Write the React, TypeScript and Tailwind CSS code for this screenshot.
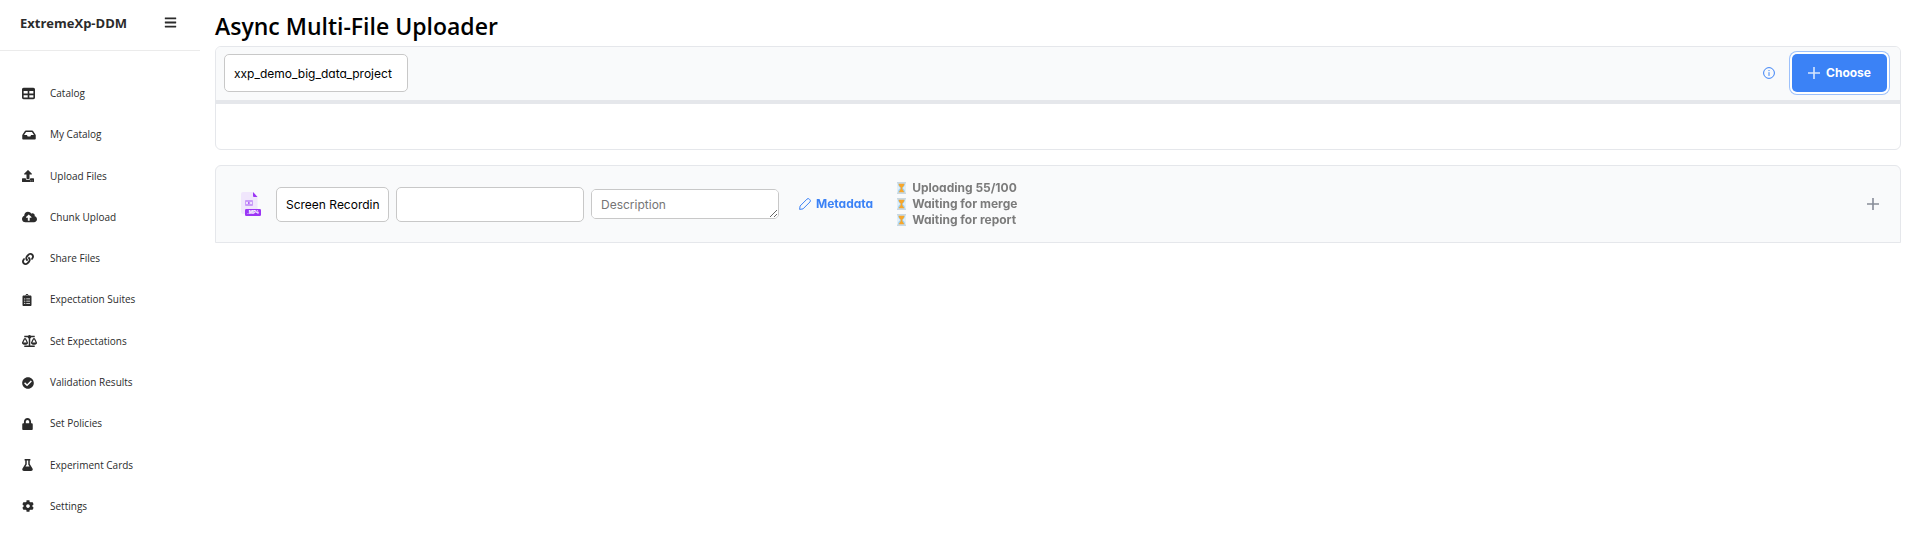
import type { ReactNode } from "react";
import type { IconType } from "react-icons";
import {
  FaBalanceScale,
  FaBars,
  FaCheckCircle,
  FaClipboardList,
  FaCloudUploadAlt,
  FaCog,
  FaFlask,
  FaInbox,
  FaLink,
  FaLock,
  FaUpload,
} from "react-icons/fa";
import { FaTable } from "react-icons/fa6";

const navItems: { label: string; icon: IconType; size: string }[] = [
  { label: "Catalog", icon: FaTable, size: "size-[13px]" },
  { label: "My Catalog", icon: FaInbox, size: "h-3 w-[14px]" },
  { label: "Upload Files", icon: FaUpload, size: "size-3" },
  { label: "Chunk Upload", icon: FaCloudUploadAlt, size: "h-3 w-[15px]" },
  { label: "Share Files", icon: FaLink, size: "size-3" },
  { label: "Expectation Suites", icon: FaClipboardList, size: "h-3 w-[10px]" },
  { label: "Set Expectations", icon: FaBalanceScale, size: "h-3 w-[15px]" },
  { label: "Validation Results", icon: FaCheckCircle, size: "size-3" },
  { label: "Set Policies", icon: FaLock, size: "h-3 w-[11px]" },
  { label: "Experiment Cards", icon: FaFlask, size: "h-3 w-[11px]" },
  { label: "Settings", icon: FaCog, size: "size-3" },
];

const steps = ["Uploading 55/100", "Waiting for merge", "Waiting for report"];

function PlusIcon({ className }: { className?: string }) {
  return (
    <svg viewBox="0 0 12 12" className={className} fill="currentColor" aria-hidden="true">
      <path d="M5.200 0h1.600v5.200H12v1.600H6.800V12H5.200V6.800H0V5.200h5.200z" />
    </svg>
  );
}

function InfoIcon() {
  return (
    <svg viewBox="0 0 12 12" className="size-3" fill="none" stroke="currentColor" aria-hidden="true">
      <circle cx="6" cy="6" r="5.4" strokeWidth="1" />
      <path d="M6 5.200v3.700M6 3v1.100" strokeWidth="1" />
    </svg>
  );
}

function PencilIcon() {
  return (
    <svg viewBox="0 0 12 12" className="size-3" fill="none" stroke="currentColor" strokeLinejoin="round" aria-hidden="true">
      <path d="M.6 11.400l.5-3.400L8 1.100a1.600 1.600 0 0 1 2.300 0l.6.6a1.600 1.600 0 0 1 0 2.300L4 10.900z" strokeWidth="1" />
    </svg>
  );
}

function Hourglass() {
  return (
    <svg viewBox="0 0 9 12" className="h-3 w-[9px]" aria-hidden="true">
      <path d="M0 0h9v12H0z" fill="#e3eff7" />
      <path d="M1 1.500h7c0 2.200-.8 3.300-2.400 4.500C7.200 7.200 8 8.300 8 10.500H1C1 8.300 1.800 7.200 3.400 6 1.800 4.800 1 3.700 1 1.500z" fill="#9fd2f3" />
      <path d="M1.500 1.500h6c-.3 2-1.100 3-2.200 4v1.500l2.200 3.500h-6L3.700 7V5.500c-1.100-1-1.900-2-2.200-4z" fill="#f7a62b" />
      <path d="M0 0h9v1.500H0zM0 10.500h9V12H0z" fill="#c9d8e2" />
    </svg>
  );
}

function Mp4Icon() {
  return (
    <svg viewBox="0 0 20 24" className="h-6 w-5" role="img" aria-label="MP4 file">
      <path d="M2 0h10l4.500 5v17H2a2 2 0 0 1-2-2V2a2 2 0 0 1 2-2z" fill="#f0e6fc" />
      <path d="M12 0l4.500 5H13a1 1 0 0 1-1-1z" fill="#9b35f5" />
      <path d="M4.500 8.500h7v5h-7zM4.500 9.500h7M4.500 12.500h7" fill="none" stroke="#c99bf8" strokeWidth="1" />
      <path d="M7.200 9.800l2.200 1.200-2.200 1.200z" fill="#a23cf7" />
      <rect x="4" y="17" width="16" height="7" rx="1.200" fill="#9b35f5" />
      <text x="12" y="22.200" textAnchor="middle" fontSize="4.500" fontWeight="800" fill="#fff" fontFamily="Inter, sans-serif">.MP4</text>
    </svg>
  );
}

function Toolbar({ children }: { children: ReactNode }) {
  return <div className="flex items-start justify-between bg-[#f9fafb] pt-[7px] pr-[13px] pb-2 pl-2">{children}</div>;
}

export default function App() {
  const field = "rounded-[5px] border border-[#c8c8c8] bg-white pr-2 pl-[9px] text-black outline-none";
  return (
    <div className="flex min-h-screen bg-white font-['Inter',sans-serif] text-[12px] [font-feature-settings:'cv02','cv03','cv04','cv11']">
      <aside className="w-[200px] shrink-0 font-['Open_Sans','Noto_Sans',sans-serif] text-[#2b2b2b]">
        <div className="flex h-[51px] items-start justify-between border-b border-[#ebebeb] pt-[14px] pr-[23px] pl-5">
          <span className="text-[13px] leading-[18px] font-bold">ExtremeXp-DDM</span>
          <button type="button" aria-label="Toggle menu" className="pt-[2px]">
            <FaBars className="size-[13px]" />
          </button>
        </div>
        <nav className="grid min-h-[476px] auto-rows-fr pt-[22px] text-[10px]">
          {navItems.map(({ label, icon: Icon, size }) => (
            <a key={label} href="#" className="flex items-center pl-[22px]">
              <span className="flex w-7 shrink-0">
                <Icon className={size} />
              </span>
              {label}
            </a>
          ))}
        </nav>
      </aside>

      <main className="min-w-0 flex-1 pr-[9px] pl-[15px]">
        <h1 className="pt-2 pb-[2px] font-['Open_Sans','Noto_Sans',sans-serif] text-[23px] leading-9 font-semibold text-black">
          Async Multi-File Uploader
        </h1>

        <section className="overflow-hidden rounded-md border border-[#e5e7eb]">
          <Toolbar>
            <input aria-label="Project" defaultValue="xxp_demo_big_data_project" className={`${field} h-[38px] w-[184px]`} />
            <div className="flex items-center gap-[17px]">
              <button type="button" aria-label="Information" className="text-[#3b82f6]">
                <InfoIcon />
              </button>
              <button
                type="button"
                className="flex h-[38px] w-[95px] items-center justify-center gap-[6px] rounded-[5px] bg-[#3b82f6] font-bold text-white ring-1 ring-[#9dc1fb] ring-offset-2"
              >
                <PlusIcon className="size-3 opacity-80" />
                Choose
              </button>
            </div>
          </Toolbar>
          <div className="h-1 bg-[#e5e7eb]" />
          <div className="h-[45px]" />
        </section>

        <section className="mt-[15px] flex items-center rounded-t-md border border-[#e5e7eb] bg-[#f9fafb] py-[14px] pr-[21px] pl-[25px]">
          <Mp4Icon />
          <div className="ml-[15px] flex items-center gap-[7px]">
            <input aria-label="File name" defaultValue="Screen Recordin" className={`${field} h-[35px] w-[113px]`} />
            <input aria-label="Use case" className={`${field} h-[35px] w-[188px]`} />
            <textarea
              aria-label="Description"
              placeholder="Description"
              rows={1}
              className={`${field} h-[30px] w-[188px] py-[7px] leading-[16px] placeholder:text-[#757575]`}
            />
          </div>
          <button type="button" className="ml-5 flex items-center gap-[5px] font-bold text-[#3b82f6]">
            <PencilIcon />
            Metadata
          </button>
          <ul className="ml-6 font-bold text-[#7b7b7b]">
            {steps.map((step) => (
              <li key={step} className="flex items-center gap-[6px] leading-4">
                <Hourglass />
                {step}
              </li>
            ))}
          </ul>
          <button type="button" aria-label="Expand file" className="ml-auto text-[#6b7280]">
            <PlusIcon className="size-3 opacity-80" />
          </button>
        </section>
      </main>
    </div>
  );
}
